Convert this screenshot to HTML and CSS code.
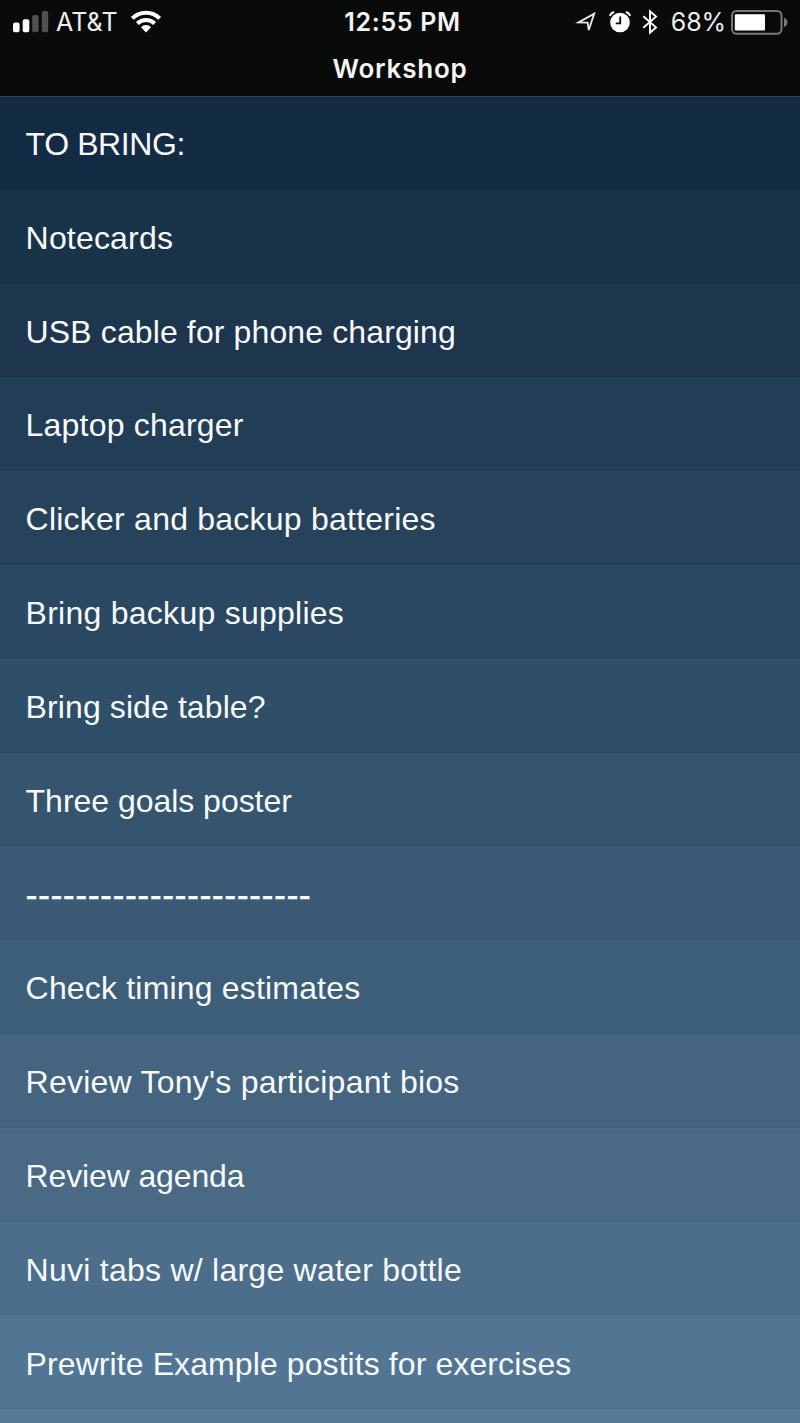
FILE: index.html
```html
<!DOCTYPE html>
<html lang="en">
<head>
<meta charset="utf-8">
<title>Workshop</title>
<link rel="stylesheet" href="styles.css">
</head>
<body>
<header class="header">
  <div class="status">
    <div class="status-left">
      <svg class="signal" width="36" height="22" viewBox="0 0 36 22"><g fill="#fff"><rect x="0" y="11.5" width="6.6" height="9.8" rx="2"/><rect x="9.7" y="8.2" width="6.6" height="13.1" rx="2"/></g><g fill="#505151"><rect x="19.2" y="4" width="6.4" height="17.3" rx="2"/><rect x="28.8" y="0" width="6.4" height="21.3" rx="2"/></g></svg>
      <span class="carrier">AT&amp;T</span>
      <svg class="wifi" width="32" height="24" viewBox="0 0 32 24"><g fill="none" stroke="#fff" stroke-width="4"><path d="M2.3 8.4a19.3 19.3 0 0 1 27.4 0"/><path d="M7.4 13.5a12.2 12.2 0 0 1 17.2 0"/></g><path fill="#fff" d="M11 17.2a7 7 0 0 1 10 0L16 22.4z"/></svg>
    </div>
    <time class="clock">12:55 PM</time>
    <div class="status-right">
      <svg class="location" width="22" height="24" viewBox="0 0 22 24"><path fill="none" stroke="#e8e8e8" stroke-width="1.8" stroke-linejoin="miter" d="M3.5 12.4L19.2 3.6L13.8 20L12.6 12.6z"/></svg>
      <svg class="alarm" width="22" height="22" viewBox="0 0 22 22"><circle cx="11" cy="11.5" r="9.8" fill="#fff"/><path fill="none" stroke="#fff" stroke-width="2" stroke-linecap="round" d="M1.2 4.2Q2.2 2 4.4 1.2M20.8 4.2Q19.8 2 17.6 1.2"/><path fill="none" stroke="#111" stroke-width="1.9" d="M11.2 5.5v6.9H6.8"/></svg>
      <svg class="bluetooth" width="16" height="26" viewBox="0 0 16 26"><path fill="none" stroke="#fff" stroke-width="1.9" d="M1.3 7.2L14 18.4L8 23.7V2.3L14 7.6L1.3 18.8"/></svg>
      <span class="percent">68%</span>
      <svg class="battery" width="57" height="25" viewBox="0 0 57 25"><rect x="1" y="1" width="49.5" height="22.8" rx="4.5" fill="none" stroke="#777978" stroke-width="2"/><rect x="3.8" y="4.2" width="30.2" height="16.2" rx="1" fill="#fff"/><path fill="#777978" d="M53 7.8q3.4 1.4 3.4 4.6T53 17z"/></svg>
    </div>
  </div>
  <h1 class="title">Workshop</h1>
</header>
<ul class="list">
  <li class="item item-1">TO BRING:</li>
  <li class="item item-2">Notecards</li>
  <li class="item item-3">USB cable for phone charging</li>
  <li class="item item-4">Laptop charger</li>
  <li class="item item-5">Clicker and backup batteries</li>
  <li class="item item-6">Bring backup supplies</li>
  <li class="item item-7">Bring side table?</li>
  <li class="item item-8">Three goals poster</li>
  <li class="item item-9">-----------------------</li>
  <li class="item item-10">Check timing estimates</li>
  <li class="item item-11">Review Tony's participant bios</li>
  <li class="item item-12">Review agenda</li>
  <li class="item item-13">Nuvi tabs w/ large water bottle</li>
  <li class="item item-14">Prewrite Example postits for exercises</li>
  <li class="item item-15"></li>
</ul>
</body>
</html>
```
FILE: styles.css
```css
* { box-sizing: border-box; }
body {
  margin: 0;
  background: #567998;
  color: #f7fafc;
  font-family: "Liberation Sans", Arial, sans-serif;
}
svg { display: block; flex: none; }
.header {
  height: 96px;
  background: #090b0b;
  font-family: Inter, sans-serif;
}
.status {
  height: 44px;
  display: grid;
  grid-template-columns: 1fr auto 1fr;
  align-items: center;
  padding: 0 12px 0 13px;
}
.status-left, .status-right { display: flex; align-items: center; }
.status-right { justify-content: flex-end; }
.carrier { margin-left: 7px; font-size: 25px; letter-spacing: 0.1px; color: #eee; }
.wifi { margin-left: 12px; }
.clock {
  padding-left: 4px;
  font-size: 25px;
  font-weight: 600;
  letter-spacing: 0.7px;
  color: #f4f4f4;
}
.alarm { margin-left: 12px; }
.bluetooth { margin-left: 11px; }
.percent { margin-left: 14px; font-size: 25px; letter-spacing: -0.1px; color: #eee; }
.battery { margin-left: 6px; }
.location, .alarm, .bluetooth { transform: translateX(2px); }
.percent { transform: translateX(1px); }
.title {
  margin: 0;
  height: 52px;
  line-height: 49px;
  text-align: center;
  font-size: 26px;
  font-weight: 600;
  letter-spacing: 0.8px;
  color: #f4f4f4;
}
.list { margin: 0; padding: 0; list-style: none; }
.item {
  height: 93.8px;
  padding: 2.6px 25.6px 0;
  display: flex;
  align-items: center;
  font-size: 32px;
  line-height: 40px;
  white-space: nowrap;
  border-top: 1px solid rgba(255, 255, 255, 0.02);
  border-bottom: 1px solid rgba(0, 0, 0, 0.05);
}
.item-1 { background: #142b44; letter-spacing: -0.4px; border-top-color: #2b4359; padding-top: 2px; }
.item-2 { background: #193349; letter-spacing: 0.18px; padding-top: 2px; }
.item-3 { background: #1d364e; letter-spacing: 0.12px; padding-top: 2.2px; }
.item-4 { background: #223d56; letter-spacing: 0.2px; padding-top: 2.2px; }
.item-5 { background: #27435c; letter-spacing: 0.23px; }
.item-6 { background: #2b4862; letter-spacing: 0.26px; }
.item-7 { background: #2f4f68; letter-spacing: 0.1px; }
.item-8 { background: #35546d; letter-spacing: -0.03px; }
.item-9 { background: #3b5a76; font-size: 36px; letter-spacing: 0.43px; padding-top: 3px; -webkit-text-stroke: 0.3px #f7fafc; }
.item-10 { background: #3d5e79; letter-spacing: 0.18px; }
.item-11 { background: #446480; letter-spacing: 0.23px; }
.item-12 { background: #496985; letter-spacing: -0.14px; }
.item-13 { background: #4c6e8b; letter-spacing: 0.25px; }
.item-14 { background: #527594; letter-spacing: 0.09px; }
.item-15 { height: 13.8px; padding: 0; background: #567998; border-bottom: 0; }
```
